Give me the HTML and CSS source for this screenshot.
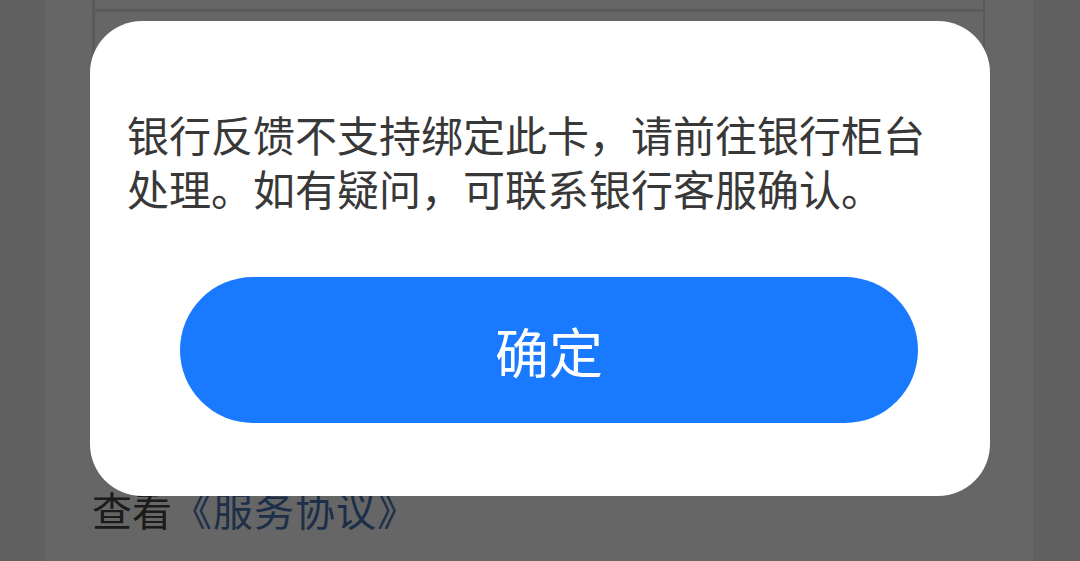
FILE: index.html
```html
<!DOCTYPE html>
<html lang="zh-CN">
<head>
<meta charset="utf-8">
<title>提示</title>
<link rel="stylesheet" href="styles.css">
</head>
<body>
<div class="page">
  <div class="sheet">
    <div class="table">
      <div class="row row-top"></div>
      <div class="row row-body"></div>
    </div>
    <p class="agreement">查看<a class="link" href="#">《服务协议》</a></p>
  </div>
</div>
<div class="mask">
  <div class="dialog">
    <p class="message">银行反馈不支持绑定此卡，请前往银行柜台处理。如有疑问，可联系银行客服确认。</p>
    <button class="confirm" type="button">确定</button>
  </div>
</div>
</body>
</html>
```
FILE: styles.css
```css
* { box-sizing: border-box; }
html, body {
  margin: 0;
  padding: 0;
  height: 100%;
  overflow: hidden;
  font-family: "Noto Sans CJK SC", "Noto Sans", sans-serif;
}
body { background: #f0f0f0; }
.page {
  height: 100%;
  padding: 0 47px 0 45px;
}
.sheet {
  height: 100%;
  background: #ffffff;
  padding: 0 48px 0 47px;
}
.table {
  border-left: 3px solid #e2e2e2;
  border-right: 2px solid #e2e2e2;
}
.row-top {
  height: 12px;
  border-bottom: 3px solid #e2e2e2;
}
.row-body { height: 400px; }
.agreement {
  margin: 71px 0 0 0;
  font-size: 40px;
  line-height: 52px;
  color: #444444;
}
.link {
  color: #4a76b4;
  text-decoration: none;
  letter-spacing: 1px;
}
.mask {
  position: fixed;
  inset: 0;
  background: rgba(0, 0, 0, 0.6);
  display: flex;
  justify-content: center;
  align-items: flex-start;
  padding-top: 21px;
}
.dialog {
  width: 900px;
  height: 475px;
  background: #ffffff;
  border-radius: 52px;
  padding: 86px 37px 0 37px;
  display: flex;
  flex-direction: column;
}
.message {
  margin: 0;
  font-size: 42px;
  line-height: 54px;
  color: #383838;
}
.confirm {
  margin: 62px 35px 0 53px;
  height: 146px;
  border: none;
  border-radius: 73px;
  background: #1a7aff;
  color: #ffffff;
  font-family: "Noto Sans CJK SC", "Noto Sans", sans-serif;
  font-size: 54px;
  padding: 0;
}
```
